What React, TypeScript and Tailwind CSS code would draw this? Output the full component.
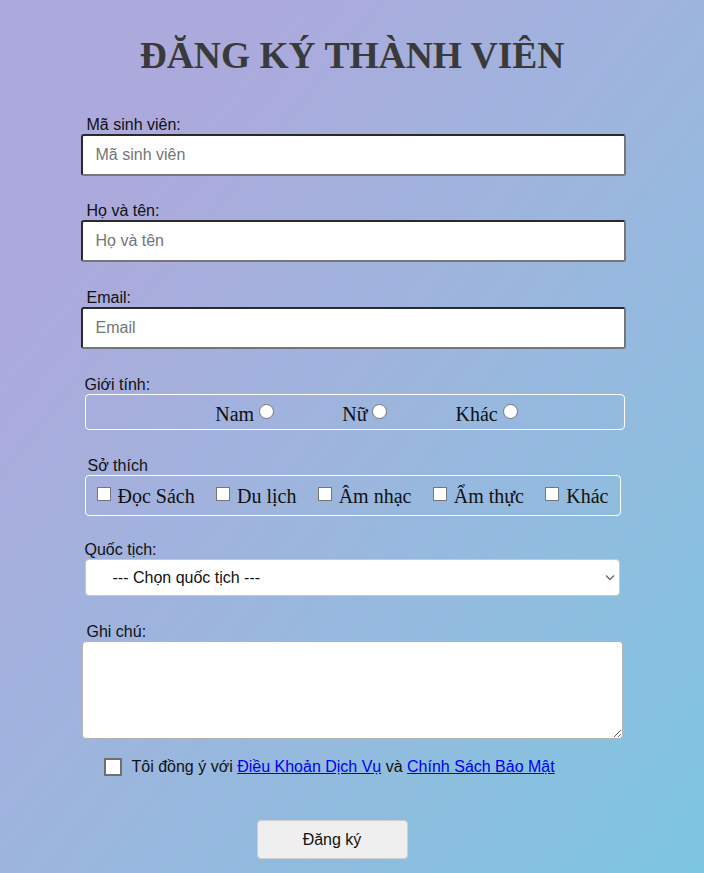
import React, { ReactElement } from 'react';

const arial = "font-['Liberation_Sans',Arial,sans-serif]";
const times = "font-['Liberation_Serif','Times_New_Roman',serif]";

const TextField = ({ label, className }: { label: string; className: string }): ReactElement => (
  <div className={className}>
    <label className="ml-[6px] block text-[16px] leading-[19px] text-[#111]">{label}:</label>
    <input
      type="text"
      placeholder={label}
      className="block h-[42px] w-[545px] rounded-[3px] border-2 border-[#2a2a2a] border-b-[#767676] border-r-[#767676] bg-white px-[13px] text-[16px] text-[#111] placeholder:text-[#757575] outline-none"
    />
  </div>
);

const Radio = ({ label, name }: { label: string; name: string }): ReactElement => (
  <label className="flex items-center">
    <span className="text-[20px] leading-[22px] text-[#111]">{label}</span>
    <input
      type="radio"
      name={name}
      className="ml-[5px] -mt-[4px] h-[15px] w-[15px] appearance-none rounded-full border-[1.5px] border-[#767676] bg-white"
    />
  </label>
);

const Check = ({ label }: { label: string }): ReactElement => (
  <label className="flex items-center">
    <input
      type="checkbox"
      className="mr-[7px] -mt-[4px] h-[14px] w-[14px] appearance-none border-[1.5px] border-[#767676] bg-white"
    />
    <span className="text-[20px] leading-[22px] text-[#111]">{label}</span>
  </label>
);

export default function App(): ReactElement {
  return (
    <div
      className={`min-h-[873px] w-full bg-linear-to-br from-[#acaadc] from-20% to-[#7cc6e0] ${arial}`}
    >
      <div className="mx-auto w-[545px] pt-[32px] pb-[14px]">
        <h1
          className={`text-center text-[37.5px] leading-[48px] font-bold text-[#3a3a3a] ${times}`}
        >
          ĐĂNG KÝ THÀNH VIÊN
        </h1>

        <TextField label="Mã sinh viên" className="mt-[35px] ml-[1px]" />
        <TextField label="Họ và tên" className="mt-[25px] ml-[1px]" />
        <TextField label="Email" className="mt-[26px] ml-[1px]" />

        <div className="mt-[26px] ml-[5px]">
          <label className="block text-[16px] leading-[19px] text-[#111]">Giới tính:</label>
          <div
            className={`flex h-[36px] w-[540px] items-center justify-center gap-[68px] rounded-[4px] border border-white pt-[3px] pl-[24px] ${times}`}
          >
            <Radio label="Nam" name="gt" />
            <Radio label="Nữ" name="gt" />
            <Radio label="Khác" name="gt" />
          </div>
        </div>

        <div className="mt-[26px] ml-[5px]">
          <label className="ml-[3px] block text-[16px] leading-[19px] text-[#111]">Sở thích</label>
          <div
            className={`flex h-[41px] w-[536px] items-center justify-between rounded-[4px] border border-white px-[11px] ${times}`}
          >
            <Check label="Đọc Sách" />
            <Check label="Du lịch" />
            <Check label="Âm nhạc" />
            <Check label="Ẩm thực" />
            <Check label="Khác" />
          </div>
        </div>

        <div className="mt-[24px] ml-[5px]">
          <label className="block text-[16px] leading-[19px] text-[#111]">Quốc tịch:</label>
          <div className="relative h-[37px] w-[535px] rounded-[4px] border border-[#c8c8c8] bg-white">
            <select className="h-full w-full appearance-none bg-transparent pl-[27px] text-[16px] text-[#111] outline-none">
              <option>--- Chọn quốc tịch ---</option>
            </select>
            <svg
              className="pointer-events-none absolute top-[14px] right-[4px]"
              width="10"
              height="7"
              viewBox="0 0 10 7"
              fill="none"
            >
              <path d="M1 1.5 5 5.5 9 1.5" stroke="#6b6b6b" strokeWidth="1.4" />
            </svg>
          </div>
        </div>

        <div className="mt-[26px] ml-[2px]">
          <label className="ml-[5px] block text-[16px] leading-[19px] text-[#111]">Ghi chú:</label>
          <textarea className="block h-[98px] w-[541px] resize-y rounded-[4px] border border-[#b5b5b5] bg-white outline-none" />
        </div>

        <div className="mt-[18px] ml-[24px] flex items-center">
          <input
            type="checkbox"
            className="h-[18px] w-[18px] appearance-none border-2 border-[#6f6f6f] bg-white"
          />
          <span className="ml-[10px] text-[16px] leading-[20px] text-[#111]">
            Tôi đồng ý với{' '}
            <a href="#" className="text-[#0000ee] underline">
              Điều Khoản Dịch Vụ
            </a>{' '}
            và{' '}
            <a href="#" className="text-[#0000ee] underline">
              Chính Sách Bảo Mật
            </a>
          </span>
        </div>

        <div className="mt-[43px] flex justify-center">
          <button className="ml-[-40px] h-[39px] w-[151px] rounded-[4px] border border-[#d0d0d0] bg-[#efefef] text-[16px] text-[#111]">
            Đăng ký
          </button>
        </div>
      </div>
    </div>
  );
}
